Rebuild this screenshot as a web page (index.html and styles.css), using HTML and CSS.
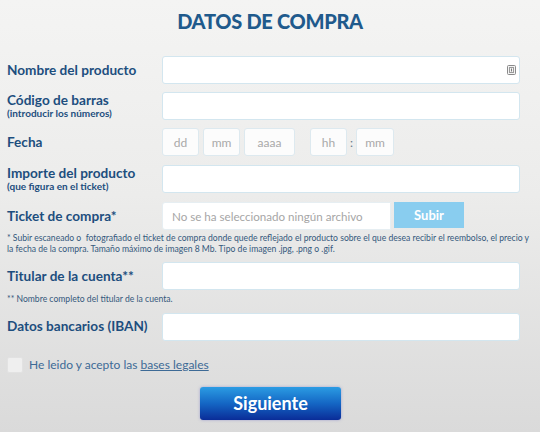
FILE: index.html
```html
<!DOCTYPE html>
<html lang="es">
<head>
<meta charset="utf-8">
<title>Datos de compra</title>
<link rel="stylesheet" href="styles.css">
</head>
<body>
<main class="page">
  <h1 class="title">DATOS DE COMPRA</h1>
  <form class="form">
    <div class="row row-first">
      <label class="label"><span class="main">Nombre del producto</span></label>
      <div class="field field-icon">
        <input class="input" type="text">
        <svg class="autofill" width="9" height="10" viewBox="0 0 9 10" aria-hidden="true">
          <rect x="0.5" y="0.5" width="8" height="9" rx="1" fill="#f3f3f3" stroke="#8a8a8a"/>
          <rect x="2.5" y="2.5" width="4" height="5" fill="none" stroke="#9a9a9a"/>
          <path d="M4.5 3.5v3" stroke="#7a7a7a"/>
        </svg>
      </div>
    </div>
    <div class="row r8">
      <label class="label"><span class="main">Código de barras</span><span class="sub">(introducir los números)</span></label>
      <div class="field"><input class="input" type="text"></div>
    </div>
    <div class="row r8">
      <label class="label"><span class="main">Fecha</span></label>
      <div class="field date">
        <span class="box b-dd">dd</span>
        <span class="box b-mm">mm</span>
        <span class="box b-yy">aaaa</span>
        <span class="box b-hh">hh</span>
        <span class="colon">:</span>
        <span class="box b-mi">mm</span>
      </div>
    </div>
    <div class="row r9">
      <label class="label"><span class="main">Importe del producto</span><span class="sub">(que figura en el ticket)</span></label>
      <div class="field"><input class="input" type="text"></div>
    </div>
    <div class="row r9">
      <label class="label"><span class="main">Ticket de compra*</span></label>
      <div class="field file">
        <span class="filename">No se ha seleccionado ningún archivo</span>
        <span class="upload">Subir</span>
      </div>
    </div>
    <p class="note note-ticket">* Subir escaneado o&nbsp; fotografiado el ticket de compra donde quede reflejado el producto sobre el que desea recibir el reembolso, el precio y la fecha de la compra. Tamaño máximo de imagen 8 Mb. Tipo de imagen .jpg, .png o .gif.</p>
    <div class="row r8">
      <label class="label"><span class="main">Titular de la cuenta**</span></label>
      <div class="field"><input class="input" type="text"></div>
    </div>
    <p class="note note-titular">** Nombre completo del titular de la cuenta.</p>
    <div class="row r8">
      <label class="label"><span class="main">Datos bancarios (IBAN)</span></label>
      <div class="field"><input class="input" type="text"></div>
    </div>
    <div class="accept">
      <span class="check"></span>
      <span class="accept-text">He leido y acepto las <a class="link" href="#">bases legales</a></span>
    </div>
    <div class="submit-wrap">
      <button class="submit" type="button">Siguiente</button>
    </div>
  </form>
</main>
</body>
</html>
```
FILE: styles.css
```css
html, body {
  margin: 0;
  padding: 0;
}
body {
  width: 540px;
  height: 432px;
  overflow: hidden;
  background: linear-gradient(#f4f4f3 0%, #ececeb 45%, #dadada 100%);
  font-family: "Lato", "Open Sans", sans-serif;
  color: #1d4e7e;
}
.page {
  padding: 8px 20px 0 7px;
}
.title {
  margin: 0;
  text-align: center;
  font-size: 20px;
  line-height: 26px;
  font-weight: 900;
  color: #1f5a8c;
  padding-left: 13px;
  letter-spacing: -0.3px;
}
.form {
  margin-top: 22px;
}
.row {
  display: flex;
  align-items: center;
  height: 28px;
}
.r8 { margin-top: 8px; }
.r9 { margin-top: 9px; }
.label {
  width: 155px;
  flex: none;
  display: flex;
  flex-direction: column;
}
.main {
  font-size: 13.6px;
  line-height: 15px;
  font-weight: 700;
  color: #1d4e7e;
}
.sub {
  font-size: 10px;
  line-height: 11px;
  font-weight: 700;
  color: #1d4e7e;
}
.field {
  flex: 1;
  height: 28px;
  position: relative;
  display: flex;
}
.input {
  width: 100%;
  height: 28px;
  box-sizing: border-box;
  border: 1px solid #d3e6ef;
  border-radius: 3px;
  background: #fff;
  margin: 0;
  padding: 0 8px;
}
.autofill {
  position: absolute;
  right: 4px;
  top: 9px;
}
.date {
  align-items: center;
}
.box {
  box-sizing: border-box;
  height: 28px;
  border: 1px solid #dde9ef;
  border-radius: 3px;
  background: #fcfcfc;
  color: #a9a9a9;
  font-size: 12px;
  display: flex;
  align-items: center;
  justify-content: center;
  margin-right: 4px;
}
.b-dd { width: 37px; }
.b-mm { width: 37px; }
.b-yy { width: 51px; margin-right: 15px; }
.b-hh { width: 37px; margin-right: 3px; }
.b-mi { width: 38px; }
.colon {
  color: #6a7a88;
  font-size: 12px;
  margin-right: 3px;
}
.file {
  align-items: stretch;
}
.filename {
  box-sizing: border-box;
  width: 229px;
  border: 1px solid #e6eef2;
  border-radius: 3px 0 0 3px;
  background: #fff;
  color: #a6a6a6;
  font-size: 11.6px;
  display: flex;
  align-items: center;
  padding-left: 9px;
  white-space: nowrap;
}
.upload {
  margin-left: 3px;
  width: 70px;
  height: 26px;
  background: #89cdef;
  color: #fff;
  font-size: 13px;
  font-weight: 700;
  display: flex;
  align-items: center;
  justify-content: center;
}
.note {
  margin: 3px 0 0;
  font-size: 8.6px;
  line-height: 10.5px;
  color: #34587c;
}
.note-ticket {
  margin-right: -14px;
}
.note-titular {
  margin-top: 4px;
}
.accept {
  display: flex;
  align-items: center;
  margin-top: 16px;
  height: 16px;
}
.check {
  width: 16px;
  height: 16px;
  box-sizing: border-box;
  border: 1px solid #e2e2e2;
  background: #efefef;
  border-radius: 2px;
  margin-right: 6px;
}
.accept-text {
  font-size: 12px;
  color: #3d6a96;
}
.link {
  color: #3d6a96;
  text-decoration: underline;
}
.submit-wrap {
  margin-top: 14px;
  display: flex;
  justify-content: center;
  padding-left: 14px;
}
.submit {
  width: 141px;
  height: 33px;
  border: 0;
  border-radius: 3px;
  background: linear-gradient(#2b9ce3 0%, #1466c4 50%, #0a2c98 100%);
  box-shadow: 0 0 3px rgba(120, 120, 200, 0.6);
  color: #fff;
  font-family: "Lato", "Open Sans", sans-serif;
  font-size: 18px;
  font-weight: 700;
  padding: 0;
}
```
